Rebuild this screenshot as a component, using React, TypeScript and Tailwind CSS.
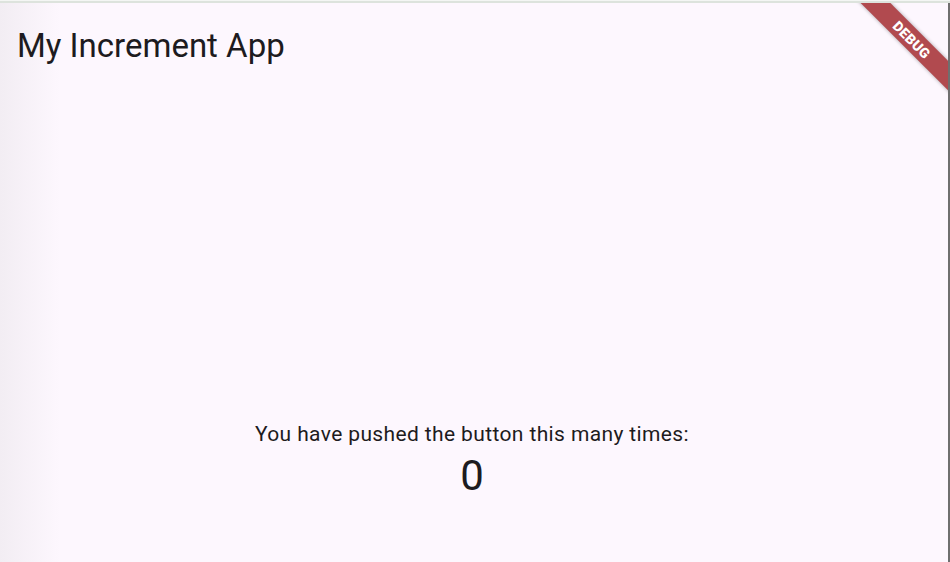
export default function App() {
  const count = 0;

  return (
    <div className="w-[950px] h-[562px] flex flex-col bg-[#fdf7fe] font-['Roboto',sans-serif] text-[#1d1b20] overflow-hidden">
      {/* window frame top */}
      <div className="h-[1px] bg-[#f4f6f4]" />
      <div className="h-[2px] bg-[#dde3dd]" />

      <div className="relative flex-1 flex flex-col overflow-hidden border-r-2 border-[#6f6f6f]">
        {/* left edge shade */}
        <div className="absolute inset-y-0 left-0 w-[60px] bg-gradient-to-r from-[#f2edf3] to-transparent pointer-events-none" />

        {/* App bar */}
        <header className="relative h-[84px] flex items-center pl-[17px]">
          <h1 className="text-[33px] leading-none font-normal">My Increment App</h1>
        </header>

        {/* Body */}
        <main className="relative flex flex-col items-center pt-[332px] pr-[4px]">
          <p className="text-[21px] leading-[30px] tracking-[0.375px]">
            You have pushed the button this many times:
          </p>
          <p className="text-[42px] leading-[54px]">{count}</p>
        </main>

        {/* Debug banner */}
        <div className="absolute left-[832px] top-[26px] w-[160px] h-[21px] rotate-45 bg-[#b14a4f] shadow-[0_0_4px_rgba(0,0,0,0.35)] flex items-center justify-center">
          <span className="text-white text-[14px] font-black tracking-[0.3px] leading-none">DEBUG</span>
        </div>
      </div>
    </div>
  );
}
